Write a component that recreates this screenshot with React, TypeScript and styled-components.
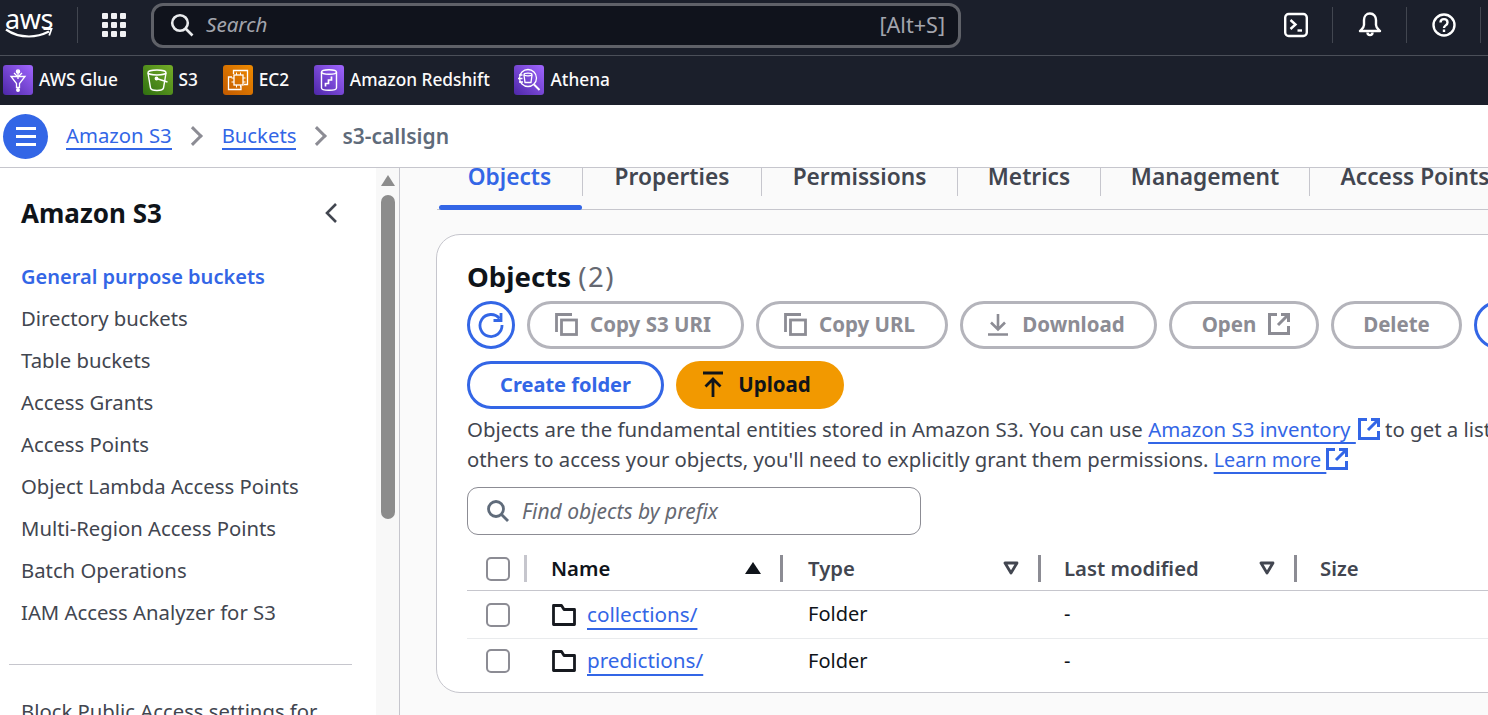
import React from "react"
import styled, { createGlobalStyle } from "styled-components"

const FONT = `"Noto Sans", "Open Sans", sans-serif`
const BLUE = "#3366e6"

const NAV_ITEMS = [
    "Directory buckets",
    "Table buckets",
    "Access Grants",
    "Access Points",
    "Object Lambda Access Points",
    "Multi-Region Access Points",
    "Batch Operations",
    "IAM Access Analyzer for S3",
]

const TABS = [
    { name: "Objects", width: 146 },
    { name: "Properties", width: 179 },
    { name: "Permissions", width: 196 },
    { name: "Metrics", width: 143 },
    { name: "Management", width: 209 },
    { name: "Access Points", width: 210 },
]

const ROWS = [
    { name: "collections/" },
    { name: "predictions/" },
]

const ExternalIcon = ({ size = 22 }: { size?: number }) => (
    <svg width={size} height={size} viewBox="0 0 22 22" fill="none" stroke="currentColor" strokeWidth="3">
        <path d="M9 1.500H1.500v19h19V13" />
        <path d="M10 12 20 2M13 1.500h7.500V9" />
    </svg>
)

const CopyIcon = () => (
    <svg width="24" height="24" viewBox="0 0 24 24" fill="none" stroke="currentColor" strokeWidth="2.800">
        <path d="M2.500 20V2.500H18" />
        <rect x="7.500" y="8" width="15" height="14.500" />
    </svg>
)

const FilterIcon = () => (
    <svg width="16" height="14" viewBox="0 0 16 14" fill="none" stroke="#424650" strokeWidth="2.800" strokeLinejoin="round">
        <path d="M2 2h12L8 12z" />
    </svg>
)

const FolderIcon = () => (
    <svg width="24" height="22" viewBox="0 0 24 22" fill="none" stroke="#16191f" strokeWidth="2.800" strokeLinejoin="round">
        <path d="M1.500 1.500h8l2.500 4h10.500v15h-21z" />
    </svg>
)

const GlueGlyph = () => (
    <svg width="30" height="30" viewBox="0 0 30 30" fill="none" stroke="#fff" strokeWidth="1.300">
        <path d="M8 11.500h14L16.500 18.500v4h-3v-4z" />
        <circle cx="15" cy="6.500" r="1.600" fill="#fff" />
        <circle cx="15" cy="25" r="1.300" fill="#fff" />
        <path d="M15 8v6M11 8l3 3M19 8l-3 3" />
    </svg>
)

const S3Glyph = () => (
    <svg width="30" height="30" viewBox="0 0 30 30" fill="none" stroke="#fff" strokeWidth="1.400">
        <ellipse cx="14" cy="7.500" rx="9" ry="2.500" />
        <path d="M5 8l2.500 15c.3 1.500 3.500 2.500 6.500 2.500s6.200-1 6.500-2.500L23 8" />
        <path d="M13.500 13.500l11 3.500" />
        <circle cx="13.500" cy="13.500" r="1.200" fill="#fff" />
    </svg>
)

const Ec2Glyph = () => (
    <svg width="30" height="30" viewBox="0 0 30 30" fill="none" stroke="#fff" strokeWidth="1.300">
        <path d="M10.500 9V5.500h14v14H21" />
        <path d="M9 12H5.500v12.500H18V21" />
        <rect x="11" y="10" width="9" height="10" />
        <path d="M13.500 7.500V10M17.500 7.500V10M13.500 20v2.500M17.500 20v2.500M8.500 13h2.500M8.500 17h2.500M20 13h2.500M20 17h2.500" strokeWidth="1" />
    </svg>
)

const RedshiftGlyph = () => (
    <svg width="30" height="30" viewBox="0 0 30 30" fill="none" stroke="#fff" strokeWidth="1.400">
        <ellipse cx="15" cy="7" rx="7.500" ry="2.300" />
        <path d="M7.500 7v16c0 1.300 3.500 2.300 7.500 2.300s7.500-1 7.500-2.300V7" />
        <path d="M11.500 21.500v-3l3 0v-3.500l3 0v-3.500" strokeWidth="1.700" />
    </svg>
)

const AthenaGlyph = () => (
    <svg width="30" height="30" viewBox="0 0 30 30" fill="none" stroke="#fff" strokeWidth="1.300">
        <circle cx="14" cy="13" r="8.500" />
        <path d="M20 19.500l5.500 5.500" strokeWidth="2" />
        <ellipse cx="14" cy="9.500" rx="4" ry="1.300" />
        <path d="M10 10l1 7.500h6l1-7.500M5 10h3.500M4 13.500h4.500M5 17h4" />
    </svg>
)

const SERVICES = [
    { name: "AWS Glue", from: "#4d27a8", to: "#a166ff", glyph: <GlueGlyph /> },
    { name: "S3", from: "#2f7010", to: "#75ad28", glyph: <S3Glyph /> },
    { name: "EC2", from: "#c25a00", to: "#ee8a00", glyph: <Ec2Glyph /> },
    { name: "Amazon Redshift", from: "#4d27a8", to: "#a166ff", glyph: <RedshiftGlyph /> },
    { name: "Athena", from: "#4d27a8", to: "#a166ff", glyph: <AthenaGlyph /> },
]

const App = () => {
    return (
        <Page>
            <GlobalStyle />
            <TopBar>
                <Logo>
                    <LogoText>aws</LogoText>
                    <LogoSmile width="48" height="12" viewBox="0 0 48 12" fill="none">
                        <path d="M1 2.500C8 7.500 16 9.500 24 9.500c7 0 14-2 20-5" stroke="#fff" strokeWidth="2.200" />
                        <path d="M38.500 2h8l-2.300 6.500" stroke="#fff" strokeWidth="1.800" />
                    </LogoSmile>
                </Logo>
                <TopDivider />
                <GridButton>
                    {Array.from({ length: 9 }).map((_, i) => <GridDot key={i} />)}
                </GridButton>
                <SearchBox>
                    <svg width="24" height="24" viewBox="0 0 24 24" fill="none" stroke="#e9ebed" strokeWidth="2.600">
                        <circle cx="10" cy="10" r="7.800" />
                        <path d="M15.500 15.500l7 7" />
                    </svg>
                    <SearchPlaceholder>Search</SearchPlaceholder>
                    <SearchHint>[Alt+S]</SearchHint>
                </SearchBox>
                <TopActions>
                    <TopAction>
                        <svg width="24" height="26" viewBox="0 0 24 26" fill="none" stroke="#fff" strokeWidth="2.400">
                            <rect x="1.200" y="2" width="21.600" height="22" rx="3.500" />
                            <path d="M6.500 8l5 4.500-5 4.500" />
                            <path d="M13.500 18.500h4.500" />
                        </svg>
                    </TopAction>
                    <TopAction>
                        <svg width="26" height="26" viewBox="0 0 26 26" fill="none" stroke="#fff" strokeWidth="2.400" strokeLinejoin="round">
                            <path d="M13 1.500c-3.800 0-6 3-6 6.500v5c0 2.500-2.200 4-4 6h20c-1.800-2-4-3.500-4-6V8c0-3.500-2.200-6.500-6-6.500z" />
                            <path d="M10.500 20.500c0 3.500 5 3.500 5 0" />
                        </svg>
                    </TopAction>
                    <TopAction>
                        <svg width="24" height="24" viewBox="0 0 24 24" fill="none" stroke="#fff" strokeWidth="2.400">
                            <circle cx="12" cy="12" r="10.500" />
                            <path d="M8.500 9.500c0-4.500 7-4.500 7 0 0 3-3.500 2.800-3.500 5.500" />
                            <path d="M12 16.500v2.500" />
                        </svg>
                    </TopAction>
                </TopActions>
            </TopBar>

            <ServiceBar>
                {SERVICES.map((service) => (
                    <ServiceItem key={service.name}>
                        <ServiceIcon $from={service.from} $to={service.to}>{service.glyph}</ServiceIcon>
                        <ServiceName>{service.name}</ServiceName>
                    </ServiceItem>
                ))}
            </ServiceBar>

            <Breadcrumbs>
                <MenuButton>
                    <MenuLine />
                    <MenuLine />
                    <MenuLine />
                </MenuButton>
                <CrumbLink>Amazon S3</CrumbLink>
                <CrumbArrow />
                <CrumbLink>Buckets</CrumbLink>
                <CrumbArrow />
                <CrumbCurrent>s3-callsign</CrumbCurrent>
            </Breadcrumbs>

            <Body>
                <Sidebar>
                    <SideHeader>
                        <SideTitle>Amazon S3</SideTitle>
                        <svg width="16" height="22" viewBox="0 0 16 22" fill="none" stroke="#424650" strokeWidth="2.600">
                            <path d="M13 2 4 11l9 9" />
                        </svg>
                    </SideHeader>
                    <NavItem $active>General purpose buckets</NavItem>
                    {NAV_ITEMS.map((item) => <NavItem key={item}>{item}</NavItem>)}
                    <SideDivider />
                    <NavItem>Block Public Access settings for</NavItem>
                </Sidebar>
                <ScrollTrack>
                    <ScrollArrow />
                    <ScrollThumb />
                </ScrollTrack>
                <Main>
                    <TabRow>
                        {TABS.map((tab, i) => <Tab key={tab.name} $active={i === 0} $width={tab.width}>{tab.name}</Tab>)}
                    </TabRow>
                    <Card>
                        <CardTitle>Objects <CardCount>(2)</CardCount></CardTitle>
                        <ButtonStack>
                            <ButtonRow>
                                <IconButton>
                                    <svg width="28" height="28" viewBox="0 0 28 28" fill="none" stroke={BLUE} strokeWidth="2.800">
                                        <path d="M22.500 7.500A11 11 0 1 0 25 14" />
                                        <path d="M24 2v7.500h-7.500" />
                                    </svg>
                                </IconButton>
                                <PillButton $width={217} $disabled $shift={-6}><CopyIcon />Copy S3 URI</PillButton>
                                <PillButton $width={192} $disabled $shift={-6}><CopyIcon />Copy URL</PillButton>
                                <PillButton $width={197} $disabled $shift={-6}>
                                    <svg width="24" height="24" viewBox="0 0 24 24" fill="none" stroke="currentColor" strokeWidth="2.600">
                                        <path d="M12 2v15M5 10.500l7 7 7-7M2 22.500h20" />
                                    </svg>
                                    Download
                                </PillButton>
                                <PillButton $width={150} $disabled $shift={4}>Open<ExternalIcon /></PillButton>
                                <PillButton $width={131} $disabled>Delete</PillButton>
                                <PillButton $width={190}>Actions</PillButton>
                            </ButtonRow>
                            <ButtonRow>
                                <CreateButton $width={197}>Create folder</CreateButton>
                                <UploadButton>
                                    <svg width="24" height="28" viewBox="0 0 24 28" fill="none" stroke="#0f141a" strokeWidth="2.800">
                                        <path d="M2 3h20M12 27V9M4.500 16.500 12 9l7.500 7.500" />
                                    </svg>
                                    Upload
                                </UploadButton>
                            </ButtonRow>
                        </ButtonStack>
                        <Description>
                            <DescLine $size={20.4}>
                                Objects are the fundamental entities stored in Amazon S3. You can use{" "}
                                <TextLink>Amazon S3 inventory </TextLink>
                                <LinkIcon $gap={2}><ExternalIcon /></LinkIcon> to get a list of all objects in your bucket. For
                            </DescLine>
                            <DescLine $size={20.3}>
                                others to access your objects, you'll need to explicitly grant them permissions.{" "}
                                <LearnLink>Learn more </LearnLink>
                                <LinkIcon><ExternalIcon /></LinkIcon>
                            </DescLine>
                        </Description>
                        <PrefixSearch>
                            <svg width="24" height="24" viewBox="0 0 24 24" fill="none" stroke="#5f6b7a" strokeWidth="2.800">
                                <circle cx="10" cy="10" r="7.500" />
                                <path d="M15.500 15.500l6.500 6.500" />
                            </svg>
                            <PrefixText>Find objects by prefix</PrefixText>
                        </PrefixSearch>
                        <TableHead>
                            <CheckCell>
                                <CheckBox />
                                <ColumnRule $light />
                            </CheckCell>
                            <HeadCell $sorted>
                                Name
                                <SortIcon>
                                    <svg width="16" height="14" viewBox="0 0 16 14" fill="#0f141a"><path d="M8 1l8 12H0z" /></svg>
                                </SortIcon>
                                <ColumnRule />
                            </HeadCell>
                            <HeadCell $pad={25}>
                                Type
                                <SortIcon><FilterIcon /></SortIcon>
                                <ColumnRule />
                            </HeadCell>
                            <HeadCell $pad={23}>
                                Last modified
                                <SortIcon><FilterIcon /></SortIcon>
                                <ColumnRule />
                            </HeadCell>
                            <HeadCell $pad={23}>Size</HeadCell>
                        </TableHead>
                        {ROWS.map((row, i) => (
                            <TableRow key={row.name} $last={i === ROWS.length - 1}>
                                <CheckCell><CheckBox /></CheckCell>
                                <NameCell>
                                    <FolderIcon />
                                    <RowLink>{row.name}</RowLink>
                                </NameCell>
                                <BodyCell $pad={25}>Folder</BodyCell>
                                <BodyCell $pad={23}>-</BodyCell>
                                <BodyCell $pad={23} />
                            </TableRow>
                        ))}
                    </Card>
                </Main>
            </Body>
        </Page>
    )
}

export default App

const GlobalStyle = createGlobalStyle`
    html, body {
        margin: 0;
        padding: 0;
        background: #fff;
        overflow: hidden;
    }
    * {
        box-sizing: border-box;
    }
`

const Page = styled.div`
    width: 1488px;
    height: 715px;
    overflow: hidden;
    display: flex;
    flex-direction: column;
    font-family: ${FONT};
    color: #0f141a;
`

const TopBar = styled.div`
    height: 56px;
    flex: none;
    display: flex;
    align-items: center;
    background: #1b1f2b;
    border-bottom: 1px solid #4b4f59;
    padding: 0 0 5px 5px;
`

const Logo = styled.div`
    width: 48px;
    display: flex;
    flex-direction: column;
    align-items: center;
    padding-bottom: 3px;
`

const LogoText = styled.span`
    font-size: 27px;
    line-height: 22px;
    color: #fff;
    letter-spacing: -0.5px;
`

const LogoSmile = styled.svg`
    margin-top: -3px;
`

const TopDivider = styled.div`
    width: 1px;
    height: 36px;
    margin-left: 24px;
    background: #424650;
`

const GridButton = styled.div`
    display: grid;
    grid-template-columns: repeat(3, 6px);
    gap: 3px;
    margin-left: 24px;
`

const GridDot = styled.span`
    width: 6px;
    height: 6px;
    border-radius: 1px;
    background: #f1f1f4;
`

const SearchBox = styled.div`
    width: 810px;
    height: 45px;
    margin-left: 25px;
    display: flex;
    align-items: center;
    padding: 0 13px 0 16px;
    background: #10131c;
    border: 3px solid #5f6168;
    border-radius: 12px;
`

const SearchPlaceholder = styled.span`
    margin-left: 12px;
    padding-bottom: 2px;
    font-size: 20.600px;
    font-style: italic;
    color: #a3a5ad;
`

const SearchHint = styled.span`
    margin-left: auto;
    padding-bottom: 2px;
    font-size: 21.600px;
    color: #a3a5ad;
`

const TopActions = styled.div`
    margin-left: auto;
    display: flex;
    padding-right: 7px;
`

const TopAction = styled.div`
    width: 74px;
    height: 36px;
    display: flex;
    align-items: center;
    justify-content: center;
    border-right: 1px solid #424650;
`

const ServiceBar = styled.div`
    height: 49px;
    flex: none;
    display: flex;
    align-items: center;
    gap: 24.700px;
    padding: 0 0 1px 3px;
    background: #1b1f2b;
`

const ServiceItem = styled.div`
    display: flex;
    align-items: center;
    gap: 6px;
`

const ServiceName = styled.span`
    padding-bottom: 2px;
    font-size: 17.300px;
    font-weight: 500;
    color: #fbfbfb;
`

const ServiceIcon = styled.span<{ $from: string; $to: string }>`
    width: 30px;
    height: 30px;
    display: block;
    border-radius: 3px;
    background: linear-gradient(45deg, ${(props) => props.$from}, ${(props) => props.$to});
`

const Breadcrumbs = styled.div`
    height: 63px;
    flex: none;
    display: flex;
    align-items: center;
    padding-left: 3px;
    background: #fff;
    border-bottom: 1px solid #c6c6cd;
`

const MenuButton = styled.div`
    width: 45px;
    height: 45px;
    margin-right: 18px;
    display: flex;
    flex-direction: column;
    align-items: center;
    justify-content: center;
    gap: 5px;
    border-radius: 50%;
    background: ${BLUE};
`

const MenuLine = styled.span`
    width: 20px;
    height: 3px;
    background: #fff;
`

const CrumbLink = styled.span`
    font-size: 20.300px;
    line-height: 26px;
    color: ${BLUE};
    border-bottom: 2px solid ${BLUE};
`

const CrumbArrow = styled.span`
    width: 14px;
    height: 14px;
    margin: 0 22px 0 14px;
    border-top: 3px solid #8c8c94;
    border-right: 3px solid #8c8c94;
    transform: rotate(45deg);
`

const CrumbCurrent = styled.span`
    font-size: 21px;
    font-weight: 600;
    color: #5f6b7a;
    margin-left: -4px;
`

const Body = styled.div`
    flex: 1;
    min-height: 0;
    display: flex;
`

const Sidebar = styled.div`
    width: 376px;
    flex: none;
    overflow: hidden;
    padding-left: 21px;
    background: #fff;
`

const SideHeader = styled.div`
    width: 318px;
    height: 87px;
    display: flex;
    align-items: center;
    justify-content: space-between;
    padding-top: 3px;
`

const SideTitle = styled.div`
    font-size: 26px;
    font-weight: 700;
    color: #0f141a;
`

const NavItem = styled.div<{ $active?: boolean }>`
    height: 42px;
    display: flex;
    align-items: center;
    font-size: ${(props) => (props.$active ? 20 : 20.3)}px;
    white-space: nowrap;
    font-weight: ${(props) => (props.$active ? 600 : 400)};
    color: ${(props) => (props.$active ? BLUE : "#424650")};
`

const SideDivider = styled.div`
    width: 343px;
    height: 1px;
    margin: 31px 0 25px -12px;
    background: #c6c6cd;
`

const ScrollTrack = styled.div`
    width: 24px;
    flex: none;
    display: flex;
    flex-direction: column;
    align-items: center;
    padding-top: 7px;
    background: #f8f8f8;
    border-right: 1px solid #c6c6cd;
`

const ScrollArrow = styled.span`
    width: 0;
    height: 0;
    border-left: 7px solid transparent;
    border-right: 7px solid transparent;
    border-bottom: 11px solid #8c8c8c;
`

const ScrollThumb = styled.span`
    width: 14px;
    height: 324px;
    margin-top: 9px;
    border-radius: 7px;
    background: #8c8c8c;
`

const Main = styled.div`
    flex: 1;
    min-width: 0;
    overflow: hidden;
    padding: 0 0 0 36px;
    background: #fafafa;
`

const TabRow = styled.div`
    height: 42px;
    display: flex;
    white-space: nowrap;
    margin-left: 1px;
    border-bottom: 1px solid #c6c6cd;
`

const Tab = styled.div<{ $active: boolean; $width: number }>`
    position: relative;
    width: ${(props) => props.$width}px;
    flex: none;
    height: 28px;
    text-align: center;
    font-size: 22.700px;
    line-height: 18px;
    font-weight: 600;
    color: ${(props) => (props.$active ? BLUE : "#424650")};
    border-right: 1px solid #c6c6cd;

    &:last-child {
        border-right: none;
    }

    ${(props) =>
        props.$active &&
        `&::after {
            content: "";
            position: absolute;
            left: 2px;
            right: 0;
            top: 37px;
            height: 5px;
            border-radius: 3px;
            background: ${BLUE};
        }`}
`

const Card = styled.div`
    width: 1300px;
    height: 459px;
    margin-top: 24px;
    padding: 24px 0 0 30px;
    background: #fff;
    border: 1px solid #c6c6cd;
    border-radius: 24px 0 0 24px;
`

const CardTitle = styled.div`
    height: 34px;
    margin-bottom: 8px;
    font-size: 27.600px;
    line-height: 34px;
    font-weight: 700;
    color: #0f141a;
`

const CardCount = styled.span`
    font-weight: 400;
    letter-spacing: 1.500px;
    color: #656871;
`

const ButtonStack = styled.div`
    display: flex;
    flex-direction: column;
    gap: 12px;
`

const ButtonRow = styled.div`
    display: flex;
    gap: 12px;
    height: 48px;
`

const IconButton = styled.div`
    width: 48px;
    height: 48px;
    flex: none;
    display: flex;
    align-items: center;
    justify-content: center;
    border: 3px solid ${BLUE};
    border-radius: 50%;
`

const PillButton = styled.div<{ $width: number; $disabled?: boolean; $shift?: number }>`
    width: ${(props) => props.$width}px;
    height: 48px;
    flex: none;
    display: flex;
    align-items: center;
    justify-content: center;
    gap: 12px;
    padding-left: ${(props) => Math.max(props.$shift ?? 0, 0)}px;
    padding-right: ${(props) => Math.max(-(props.$shift ?? 0), 0)}px;
    padding-bottom: 2px;
    font-size: 20.500px;
    font-weight: 700;
    color: ${(props) => (props.$disabled ? "#8c8c94" : BLUE)};
    border: 3px solid ${(props) => (props.$disabled ? "#b4b4bb" : BLUE)};
    border-radius: 24px;
`

const CreateButton = styled(PillButton)`
    font-size: 20px;
`

const UploadButton = styled.div`
    width: 168px;
    height: 48px;
    display: flex;
    align-items: center;
    justify-content: center;
    gap: 13px;
    padding: 0 8px 2px 0;
    font-size: 20.500px;
    font-weight: 700;
    color: #0f141a;
    background: #f29900;
    border-radius: 24px;
`

const Description = styled.div`
    margin-top: 5px;
    color: #424650;
    line-height: 30px;
`

const DescLine = styled.div<{ $size: number }>`
    white-space: nowrap;
    height: 30px;
    font-size: ${(props) => props.$size}px;
`

const TextLink = styled.span`
    color: ${BLUE};
    white-space: pre;
    text-decoration: underline;
    text-decoration-thickness: 2px;
    text-underline-offset: 5px;
`

const LearnLink = styled(TextLink)`
    font-size: 19.800px;
`

const RowLink = styled(TextLink)`
    padding-bottom: 2px;
    font-size: 20.700px;
    text-underline-offset: 6px;
`

const LinkIcon = styled.span<{ $gap?: number }>`
    color: ${BLUE};
    display: inline-block;
    margin-left: ${(props) => props.$gap ?? 0}px;
    vertical-align: -3px;
`

const PrefixSearch = styled.div`
    width: 454px;
    height: 48px;
    margin-top: 13px;
    display: flex;
    align-items: center;
    padding-left: 18px;
    gap: 12px;
    border: 1px solid #8c8c94;
    border-radius: 11px;
`

const PrefixText = styled.span`
    font-size: 21px;
    font-style: italic;
    color: #656871;
`

const TableHead = styled.div`
    height: 56px;
    display: grid;
    grid-template-columns: 60px 256px 258px 256px 200px;
    align-items: center;
    border-bottom: 1px solid #c6c6cd;
    padding-top: 12px;
`

const TableRow = styled.div<{ $last: boolean }>`
    height: ${(props) => (props.$last ? 44 : 48)}px;
    display: grid;
    grid-template-columns: 60px 256px 258px 256px 200px;
    align-items: center;
    border-bottom: ${(props) => (props.$last ? "none" : "1px solid #e9ebed")};
`

const CheckCell = styled.div`
    position: relative;
    height: 28px;
    display: flex;
    align-items: center;
    padding-left: 19px;
`

const CheckBox = styled.span`
    width: 24px;
    height: 24px;
    display: block;
    border: 2px solid #8c8c94;
    border-radius: 5px;
    background: #fff;
`

const HeadCell = styled.div<{ $pad?: number; $sorted?: boolean }>`
    position: relative;
    height: 28px;
    display: flex;
    align-items: center;
    padding-left: ${(props) => props.$pad ?? 24}px;
    padding-bottom: 2px;
    font-size: 20.300px;
    font-weight: 600;
    color: ${(props) => (props.$sorted ? "#0f141a" : "#424650")};
`

const SortIcon = styled.span`
    position: absolute;
    right: 22px;
    top: 6px;
    display: flex;
`

const ColumnRule = styled.span<{ $light?: boolean }>`
    position: absolute;
    right: 0;
    top: 0;
    width: 3px;
    height: 27px;
    background: ${(props) => (props.$light ? "#c6c6cd" : "#8c8c94")};
`

const NameCell = styled.div`
    display: flex;
    align-items: center;
    gap: 11px;
    padding-left: 25px;
    font-size: 20px;
`

const BodyCell = styled.div<{ $pad: number }>`
    padding-left: ${(props) => props.$pad}px;
    padding-bottom: 2px;
    font-size: 20px;
    color: #0f141a;
`
